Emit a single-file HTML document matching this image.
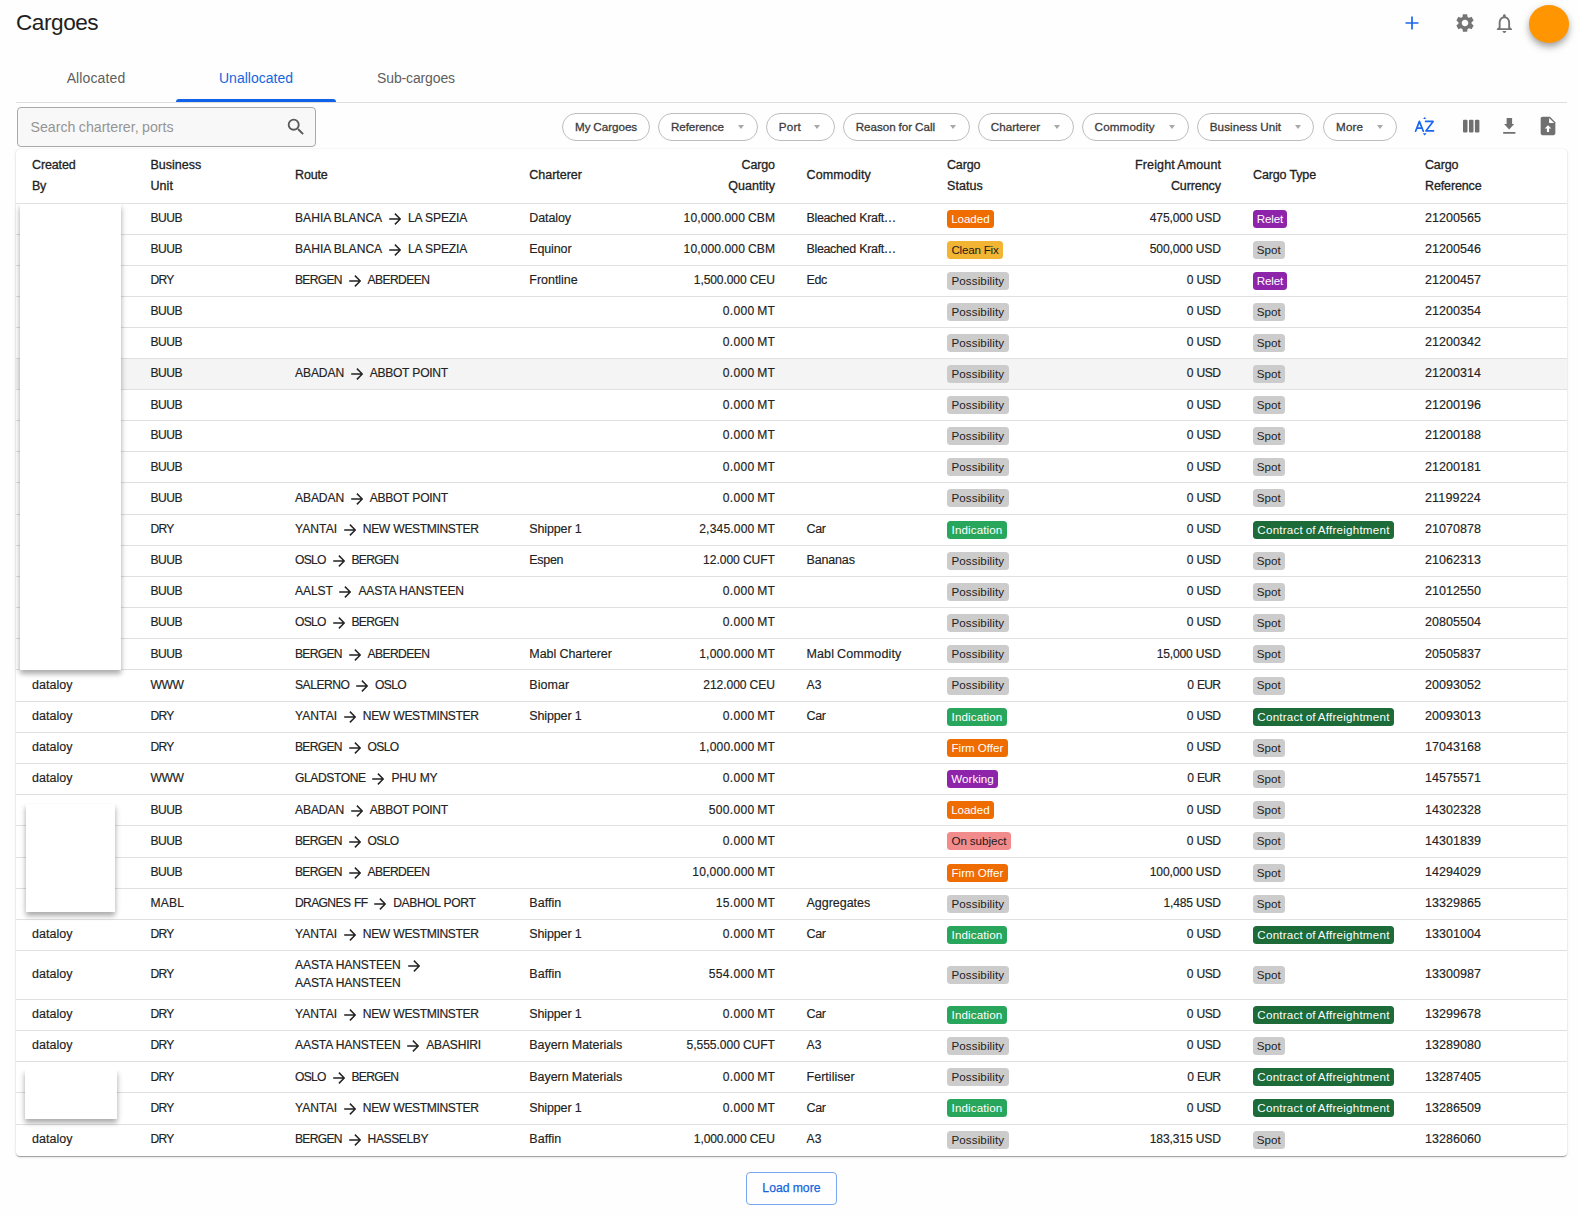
<!DOCTYPE html>
<html><head><meta charset="utf-8"><title>Cargoes</title>
<style>
*{box-sizing:border-box;margin:0;padding:0}
html,body{width:1578px;height:1217px;overflow:hidden}
body{background:#fefefe;font-family:"Liberation Sans",sans-serif;color:#212121;position:relative}
.abs{position:absolute}
.t{white-space:nowrap;color:#222;-webkit-text-stroke:0.15px currentColor}
.hd{white-space:nowrap;color:#222;-webkit-text-stroke:0.3px #222}
.ink{left:176px;top:98.5px;width:160px;height:3.5px;background:#1063e8;border-radius:3px 3px 0 0}
.divider{left:16px;top:102px;width:1551px;height:1px;background:#dedede}
.search{left:16.5px;top:107px;width:299.5px;height:39.5px;border:1px solid #a9a9a9;border-radius:4px;background:#f8f8f8}
.chipf{top:113px;height:28px;border:1px solid #bdbdbd;border-radius:14px;background:#fff}
.caret{top:125px;width:0;height:0;border-left:3.5px solid transparent;border-right:3.5px solid transparent;border-top:4.3px solid #a8a8a8}
.card{left:16px;top:148.5px;width:1551px;height:1007.5px;background:#fff;border-radius:4px;box-shadow:0 2px 1px -1px rgba(0,0,0,.2),0 1px 1px 0 rgba(0,0,0,.14),0 1px 3px 0 rgba(0,0,0,.12),0 0 1px 0 rgba(0,0,0,.12)}
.ln{left:16px;width:1551px;height:1px;background:#e0e0e0}
.tag{height:18px;border-radius:3.5px}
.arr{position:absolute;line-height:0}
.arr svg{display:block}
.red{background:#fff;box-shadow:0 4px 5px 0 rgba(0,0,0,.26),0 2px 7px 0 rgba(0,0,0,.12);clip-path:inset(0 -14px -16px -14px)}
.lm{left:746px;top:1172px;width:91px;height:33px;border:1px solid #7aa7f2;border-radius:4px}
</style></head><body>

<div class="abs t" style="left:16.00px;top:9.80px;font-size:22.6px;line-height:25px;letter-spacing:-0.460px;color:#1f1f1f;-webkit-text-stroke:0">Cargoes</div>
<svg class="abs" style="left:1404px;top:15px" width="16" height="16" viewBox="0 0 16 16"><path d="M8 1.5v13M1.5 8h13" stroke="#1a66ee" stroke-width="1.7" fill="none"/></svg>
<svg class="abs" style="left:1454.2px;top:12px" width="22" height="22" viewBox="0 0 24 24"><path fill="#757575" d="M19.14 12.94c.04-.3.06-.61.06-.94 0-.32-.02-.64-.07-.94l2.030-1.58a.49.49 0 0 0 .12-.61l-1.92-3.32a.488.488 0 0 0-.59-.22l-2.39.96c-.5-.38-1.03-.7-1.62-.94l-.36-2.54a.484.484 0 0 0-.48-.41h-3.840c-.24 0-.43.17-.47.41l-.36 2.54c-.59.24-1.13.57-1.62.94l-2.39-.96c-.22-.08-.47 0-.59.22L2.74 8.87c-.12.21-.08.47.12.61l2.03 1.58c-.05.3-.09.63-.09.94s.02.64.07.94l-2.03 1.58a.49.49 0 0 0-.12.61l1.92 3.32c.12.22.37.29.59.22l2.39-.96c.5.38 1.03.7 1.62.94l.36 2.54c.05.24.24.41.48.41h3.84c.24 0 .44-.17.47-.41l.36-2.54c.59-.24 1.13-.56 1.62-.94l2.39.96c.22.08.47 0 .59-.22l1.92-3.32c.12-.22.07-.47-.12-.61l-2.01-1.58zM12 15.6c-1.98 0-3.6-1.62-3.6-3.6s1.62-3.6 3.6-3.6 3.6 1.62 3.6 3.6-1.62 3.6-3.6 3.6z"/></svg>
<svg class="abs" style="left:1492.9px;top:12px" width="22.8" height="22.8" viewBox="0 0 24 24"><path fill="#757575" d="M12 22c1.1 0 2-.9 2-2h-4c0 1.1.89 2 2 2zm6-6v-5c0-3.07-1.64-5.64-4.5-6.32V4c0-.83-.67-1.5-1.5-1.5s-1.5.67-1.5 1.5v.68C7.63 5.36 6 7.920 6 11v5l-2 2v1h16v-1l-2-2zm-2 1H8v-6c0-2.48 1.51-4.5 4-4.5s4 2.02 4 4.5v6z"/></svg>
<div class="abs" style="left:1529.2px;top:5px;width:40.2px;height:37.8px;border-radius:50%;background:#ff9500;box-shadow:0 4px 6px -1px rgba(0,0,0,.25),0 5px 10px 0 rgba(0,0,0,.12),0 1px 10px 0 rgba(0,0,0,.08)"></div>
<div class="abs t" style="left:66.63px;top:70.00px;font-size:14.0px;line-height:16px;letter-spacing:0.128px;-webkit-text-stroke:0;color:#5f5f5f">Allocated</div>
<div class="abs t" style="left:218.98px;top:70.00px;font-size:14.0px;line-height:16px;letter-spacing:0.009px;-webkit-text-stroke:0;color:#1565e0">Unallocated</div>
<div class="abs t" style="left:377.09px;top:70.00px;font-size:14.0px;line-height:16px;letter-spacing:-0.142px;-webkit-text-stroke:0;color:#5f5f5f">Sub-cargoes</div>
<div class="abs divider"></div><div class="abs ink"></div>
<div class="abs search"></div>
<div class="abs t" style="left:30.50px;top:119.00px;font-size:14.2px;line-height:16px;letter-spacing:-0.023px;word-spacing:-0.383px;color:#959595;-webkit-text-stroke:0">Search charterer, ports</div>
<svg class="abs" style="left:285px;top:116px" width="22" height="22" viewBox="0 0 24 24"><path fill="#5a5a5a" d="M15.5 14h-.79l-.28-.27A6.471 6.471 0 0 0 16 9.5 6.5 6.5 0 1 0 9.5 16c1.61 0 3.09-.59 4.23-1.57l.27.28v.79l5 4.99L20.49 19l-4.99-5zm-6 0C7.01 14 5 11.99 5 9.5S7.01 5 9.5 5 14 7.01 14 9.5 11.99 14 9.5 14z"/></svg>
<div class="abs chipf" style="left:562.2px;width:87.7px"></div>
<div class="abs t" style="left:575.00px;top:119.90px;font-size:11.65px;line-height:13px;letter-spacing:-0.036px;word-spacing:-0.281px;color:#3c3c3c;-webkit-text-stroke:0.3px #3c3c3c">My Cargoes</div>
<div class="abs chipf" style="left:658.4px;width:99.2px"></div>
<div class="abs t" style="left:671.00px;top:119.90px;font-size:11.65px;line-height:13px;letter-spacing:-0.098px;color:#3c3c3c;-webkit-text-stroke:0.3px #3c3c3c">Reference</div>
<div class="abs caret" style="left:737.8px"></div>
<div class="abs chipf" style="left:766.3px;width:68.3px"></div>
<div class="abs t" style="left:778.80px;top:119.90px;font-size:11.65px;line-height:13px;letter-spacing:0.221px;color:#3c3c3c;-webkit-text-stroke:0.3px #3c3c3c">Port</div>
<div class="abs caret" style="left:813.8px"></div>
<div class="abs chipf" style="left:843.2px;width:126.5px"></div>
<div class="abs t" style="left:855.70px;top:119.90px;font-size:11.65px;line-height:13px;letter-spacing:-0.016px;word-spacing:-0.321px;color:#3c3c3c;-webkit-text-stroke:0.3px #3c3c3c">Reason for Call</div>
<div class="abs caret" style="left:949.9px"></div>
<div class="abs chipf" style="left:978.4px;width:95.4px"></div>
<div class="abs t" style="left:990.80px;top:119.90px;font-size:11.65px;line-height:13px;letter-spacing:0.008px;color:#3c3c3c;-webkit-text-stroke:0.3px #3c3c3c">Charterer</div>
<div class="abs caret" style="left:1054px"></div>
<div class="abs chipf" style="left:1082.3px;width:106.3px"></div>
<div class="abs t" style="left:1094.60px;top:119.90px;font-size:11.65px;line-height:13px;letter-spacing:0.147px;color:#3c3c3c;-webkit-text-stroke:0.3px #3c3c3c">Commodity</div>
<div class="abs caret" style="left:1168.7px"></div>
<div class="abs chipf" style="left:1197.3px;width:117.1px"></div>
<div class="abs t" style="left:1209.80px;top:119.90px;font-size:11.65px;line-height:13px;letter-spacing:0.047px;word-spacing:-0.446px;color:#3c3c3c;-webkit-text-stroke:0.3px #3c3c3c">Business Unit</div>
<div class="abs caret" style="left:1294.6px"></div>
<div class="abs chipf" style="left:1323.4px;width:73.2px"></div>
<div class="abs t" style="left:1336.10px;top:119.90px;font-size:11.65px;line-height:13px;letter-spacing:0.130px;color:#3c3c3c;-webkit-text-stroke:0.3px #3c3c3c">More</div>
<div class="abs caret" style="left:1376.8px"></div>
<svg class="abs" style="left:1408px;top:110px" width="32" height="32" viewBox="0 0 32 32"><g fill="none" stroke="#1a66ee" stroke-width="1.7" stroke-linejoin="round" stroke-linecap="round"><path d="M7.6 21.2L11.4 11.4L15.3 21.2M8.9 18.2H13.9"/><path d="M17.6 11.4H25.1L17.9 20.9H25.5"/></g><path d="M15.2 8.9L16.6 7.1L18.2 8.9Z M14.8 23.2H18.7L16.6 25.4Z" fill="#1a66ee"/></svg>
<svg class="abs" style="left:1462px;top:118px" width="18" height="16" viewBox="0 0 18 16"><rect x="1" y="1.8" width="4.5" height="12.8" rx="1" fill="#707070"/><rect x="7" y="1.8" width="4.5" height="12.8" rx="1" fill="#707070"/><rect x="12.9" y="1.8" width="4.5" height="12.8" rx="1" fill="#707070"/></svg>
<svg class="abs" style="left:1502px;top:116px" width="16" height="20" viewBox="0 0 16 20"><rect x="4.6" y="2" width="5.5" height="7" rx="0.5" fill="#707070"/><path d="M2.1 7.9H12.2L7.15 13.5Z" fill="#707070"/><rect x="1" y="16" width="12.6" height="1.7" rx="0.8" fill="#707070"/></svg>
<svg class="abs" style="left:1537.3px;top:115.2px" width="22" height="22" viewBox="0 0 24 24"><path d="M6 2h8.2l5.8 5.8V20c0 1.1-.9 2-2 2H6c-1.1 0-2-.9-2-2V4c0-1.1.9-2 2-2z" fill="#707070"/><path d="M13.2 3.2V8.8H18.8Z" fill="#fff"/><path d="M12 11.2l-3.6 3.6h2.4v3.8h2.4v-3.8h2.4z" fill="#fff"/></svg>
<div class="abs card"></div>
<div class="abs hd" style="left:32.00px;top:158.10px;font-size:12.5px;line-height:14px;letter-spacing:-0.119px;color:#222">Created</div>
<div class="abs hd" style="left:32.00px;top:179.20px;font-size:12.5px;line-height:14px;letter-spacing:-0.316px;color:#222">By</div>
<div class="abs hd" style="left:150.50px;top:158.10px;font-size:12.5px;line-height:14px;letter-spacing:0.009px;color:#222">Business</div>
<div class="abs hd" style="left:150.50px;top:179.20px;font-size:12.5px;line-height:14px;letter-spacing:0.042px;color:#222">Unit</div>
<div class="abs hd" style="left:295.00px;top:168.30px;font-size:12.5px;line-height:14px;letter-spacing:-0.145px;color:#222">Route</div>
<div class="abs hd" style="left:529.30px;top:168.30px;font-size:12.5px;line-height:14px;letter-spacing:-0.015px;color:#222">Charterer</div>
<div class="abs hd" style="left:374.84px;width:400px;text-align:right;top:158.10px;font-size:12.5px;line-height:14px;letter-spacing:-0.158px;color:#222">Cargo</div>
<div class="abs hd" style="left:375.02px;width:400px;text-align:right;top:179.20px;font-size:12.5px;line-height:14px;letter-spacing:0.020px;color:#222">Quantity</div>
<div class="abs hd" style="left:806.50px;top:168.30px;font-size:12.5px;line-height:14px;letter-spacing:0.129px;color:#222">Commodity</div>
<div class="abs hd" style="left:947.00px;top:158.10px;font-size:12.5px;line-height:14px;letter-spacing:-0.158px;color:#222">Cargo</div>
<div class="abs hd" style="left:947.00px;top:179.20px;font-size:12.5px;line-height:14px;letter-spacing:0.072px;color:#222">Status</div>
<div class="abs hd" style="left:821.15px;width:400px;text-align:right;top:158.10px;font-size:12.5px;line-height:14px;letter-spacing:0.145px;word-spacing:-0.680px;color:#222">Freight Amount</div>
<div class="abs hd" style="left:820.91px;width:400px;text-align:right;top:179.20px;font-size:12.5px;line-height:14px;letter-spacing:-0.093px;color:#222">Currency</div>
<div class="abs hd" style="left:1253.00px;top:168.30px;font-size:12.5px;line-height:14px;letter-spacing:-0.130px;word-spacing:-0.129px;color:#222">Cargo Type</div>
<div class="abs hd" style="left:1425.00px;top:158.10px;font-size:12.5px;line-height:14px;letter-spacing:-0.158px;color:#222">Cargo</div>
<div class="abs hd" style="left:1425.00px;top:179.20px;font-size:12.5px;line-height:14px;letter-spacing:-0.130px;color:#222">Reference</div>
<div class="abs ln" style="top:202.90px"></div>
<div class="abs ln" style="top:233.56px"></div>
<div class="abs t" style="left:150.50px;top:210.90px;font-size:12.1px;line-height:14px;letter-spacing:-0.492px;">BUUB</div>
<div class="abs t" style="left:295.00px;top:210.90px;font-size:12.1px;line-height:14px;letter-spacing:0.010px;word-spacing:-0.300px;">BAHIA BLANCA</div>
<div class="abs arr" style="left:388.95px;top:213.00px"><svg width="12" height="12" viewBox="0 0 12 12"><path d="M0.2 6H10.8M5.9 0.6L11.3 6L5.9 11.4" stroke="#222" stroke-width="1.5" fill="none"/></svg></div>
<div class="abs t" style="left:407.90px;top:210.90px;font-size:12.1px;line-height:14px;letter-spacing:-0.118px;word-spacing:-0.042px;">LA SPEZIA</div>
<div class="abs t" style="left:529.30px;top:210.90px;font-size:12.5px;line-height:14px;letter-spacing:-0.096px;">Dataloy</div>
<div class="abs t" style="left:375.08px;width:400px;text-align:right;top:210.90px;font-size:12.1px;line-height:14px;letter-spacing:0.083px;word-spacing:-0.446px;">10,000.000 CBM</div>
<div class="abs t" style="left:806.50px;top:210.90px;font-size:12.5px;line-height:14px;letter-spacing:-0.353px;word-spacing:0.316px;">Bleached Kraft…</div>
<div class="abs tag" style="left:947px;top:209.73px;width:46.7px;background:#ef6c00"></div><div class="abs t" style="left:951.15px;top:211.53px;font-size:11.6px;line-height:13px;letter-spacing:-0.050px;color:#fff;-webkit-text-stroke:0">Loaded</div>
<div class="abs t" style="left:820.86px;width:400px;text-align:right;top:210.90px;font-size:12.1px;line-height:14px;letter-spacing:-0.135px;word-spacing:-0.008px;">475,000 USD</div>
<div class="abs tag" style="left:1253px;top:209.73px;width:33.8px;background:#8e24aa"></div><div class="abs t" style="left:1256.87px;top:211.53px;font-size:11.6px;line-height:13px;letter-spacing:-0.205px;color:#fff;-webkit-text-stroke:0">Relet</div>
<div class="abs t" style="left:1425.00px;top:210.90px;font-size:12.5px;line-height:14px;letter-spacing:0.045px;">21200565</div>
<div class="abs ln" style="top:264.90px"></div>
<div class="abs t" style="left:150.50px;top:241.90px;font-size:12.1px;line-height:14px;letter-spacing:-0.492px;">BUUB</div>
<div class="abs t" style="left:295.00px;top:241.90px;font-size:12.1px;line-height:14px;letter-spacing:0.010px;word-spacing:-0.300px;">BAHIA BLANCA</div>
<div class="abs arr" style="left:388.95px;top:244.00px"><svg width="12" height="12" viewBox="0 0 12 12"><path d="M0.2 6H10.8M5.9 0.6L11.3 6L5.9 11.4" stroke="#222" stroke-width="1.5" fill="none"/></svg></div>
<div class="abs t" style="left:407.90px;top:241.90px;font-size:12.1px;line-height:14px;letter-spacing:-0.118px;word-spacing:-0.042px;">LA SPEZIA</div>
<div class="abs t" style="left:529.30px;top:241.90px;font-size:12.5px;line-height:14px;letter-spacing:-0.140px;">Equinor</div>
<div class="abs t" style="left:375.08px;width:400px;text-align:right;top:241.90px;font-size:12.1px;line-height:14px;letter-spacing:0.083px;word-spacing:-0.446px;">10,000.000 CBM</div>
<div class="abs t" style="left:806.50px;top:241.90px;font-size:12.5px;line-height:14px;letter-spacing:-0.353px;word-spacing:0.316px;">Bleached Kraft…</div>
<div class="abs tag" style="left:947px;top:240.73px;width:56px;background:#f2b533"></div><div class="abs t" style="left:951.45px;top:242.53px;font-size:11.6px;line-height:13px;letter-spacing:-0.221px;word-spacing:0.092px;color:#1a1a1a;-webkit-text-stroke:0">Clean Fix</div>
<div class="abs t" style="left:820.86px;width:400px;text-align:right;top:241.90px;font-size:12.1px;line-height:14px;letter-spacing:-0.135px;word-spacing:-0.008px;">500,000 USD</div>
<div class="abs tag" style="left:1253px;top:240.73px;width:31.5px;background:#cccccc"></div><div class="abs t" style="left:1256.84px;top:242.53px;font-size:11.6px;line-height:13px;letter-spacing:-0.012px;color:#222;-webkit-text-stroke:0">Spot</div>
<div class="abs t" style="left:1425.00px;top:241.90px;font-size:12.5px;line-height:14px;letter-spacing:0.045px;">21200546</div>
<div class="abs ln" style="top:295.80px"></div>
<div class="abs t" style="left:150.50px;top:273.10px;font-size:12.1px;line-height:14px;letter-spacing:-0.765px;">DRY</div>
<div class="abs t" style="left:295.00px;top:273.10px;font-size:12.1px;line-height:14px;letter-spacing:-0.696px;">BERGEN</div>
<div class="abs arr" style="left:348.62px;top:275.20px"><svg width="12" height="12" viewBox="0 0 12 12"><path d="M0.2 6H10.8M5.9 0.6L11.3 6L5.9 11.4" stroke="#222" stroke-width="1.5" fill="none"/></svg></div>
<div class="abs t" style="left:367.57px;top:273.10px;font-size:12.1px;line-height:14px;letter-spacing:-0.596px;">ABERDEEN</div>
<div class="abs t" style="left:529.30px;top:273.10px;font-size:12.5px;line-height:14px;letter-spacing:-0.028px;">Frontline</div>
<div class="abs t" style="left:374.87px;width:400px;text-align:right;top:273.10px;font-size:12.1px;line-height:14px;letter-spacing:-0.128px;word-spacing:-0.022px;">1,500.000 CEU</div>
<div class="abs t" style="left:806.50px;top:273.10px;font-size:12.5px;line-height:14px;letter-spacing:-0.349px;">Edc</div>
<div class="abs tag" style="left:947px;top:271.85px;width:61.7px;background:#cccccc"></div><div class="abs t" style="left:951.40px;top:273.65px;font-size:11.6px;line-height:13px;letter-spacing:0.121px;color:#222;-webkit-text-stroke:0">Possibility</div>
<div class="abs t" style="left:820.45px;width:400px;text-align:right;top:273.10px;font-size:12.1px;line-height:14px;letter-spacing:-0.548px;word-spacing:0.818px;">0 USD</div>
<div class="abs tag" style="left:1253px;top:271.85px;width:33.8px;background:#8e24aa"></div><div class="abs t" style="left:1256.87px;top:273.65px;font-size:11.6px;line-height:13px;letter-spacing:-0.205px;color:#fff;-webkit-text-stroke:0">Relet</div>
<div class="abs t" style="left:1425.00px;top:273.10px;font-size:12.5px;line-height:14px;letter-spacing:0.045px;">21200457</div>
<div class="abs ln" style="top:326.80px"></div>
<div class="abs t" style="left:150.50px;top:304.00px;font-size:12.1px;line-height:14px;letter-spacing:-0.492px;">BUUB</div>
<div class="abs t" style="left:375.28px;width:400px;text-align:right;top:304.00px;font-size:12.1px;line-height:14px;letter-spacing:0.276px;word-spacing:-0.831px;">0.000 MT</div>
<div class="abs tag" style="left:947px;top:302.80px;width:61.7px;background:#cccccc"></div><div class="abs t" style="left:951.40px;top:304.60px;font-size:11.6px;line-height:13px;letter-spacing:0.121px;color:#222;-webkit-text-stroke:0">Possibility</div>
<div class="abs t" style="left:820.45px;width:400px;text-align:right;top:304.00px;font-size:12.1px;line-height:14px;letter-spacing:-0.548px;word-spacing:0.818px;">0 USD</div>
<div class="abs tag" style="left:1253px;top:302.80px;width:31.5px;background:#cccccc"></div><div class="abs t" style="left:1256.84px;top:304.60px;font-size:11.6px;line-height:13px;letter-spacing:-0.012px;color:#222;-webkit-text-stroke:0">Spot</div>
<div class="abs t" style="left:1425.00px;top:304.00px;font-size:12.5px;line-height:14px;letter-spacing:0.045px;">21200354</div>
<div class="abs ln" style="top:358.15px"></div>
<div class="abs t" style="left:150.50px;top:334.80px;font-size:12.1px;line-height:14px;letter-spacing:-0.492px;">BUUB</div>
<div class="abs t" style="left:375.28px;width:400px;text-align:right;top:334.80px;font-size:12.1px;line-height:14px;letter-spacing:0.276px;word-spacing:-0.831px;">0.000 MT</div>
<div class="abs tag" style="left:947px;top:333.98px;width:61.7px;background:#cccccc"></div><div class="abs t" style="left:951.40px;top:335.78px;font-size:11.6px;line-height:13px;letter-spacing:0.121px;color:#222;-webkit-text-stroke:0">Possibility</div>
<div class="abs t" style="left:820.45px;width:400px;text-align:right;top:334.80px;font-size:12.1px;line-height:14px;letter-spacing:-0.548px;word-spacing:0.818px;">0 USD</div>
<div class="abs tag" style="left:1253px;top:333.98px;width:31.5px;background:#cccccc"></div><div class="abs t" style="left:1256.84px;top:335.78px;font-size:11.6px;line-height:13px;letter-spacing:-0.012px;color:#222;-webkit-text-stroke:0">Spot</div>
<div class="abs t" style="left:1425.00px;top:334.80px;font-size:12.5px;line-height:14px;letter-spacing:0.045px;">21200342</div>
<div class="abs" style="left:16px;top:359.15px;width:1551px;height:30.95px;background:#f4f4f4"></div>
<div class="abs ln" style="top:389.10px"></div>
<div class="abs t" style="left:150.50px;top:365.80px;font-size:12.1px;line-height:14px;letter-spacing:-0.492px;">BUUB</div>
<div class="abs t" style="left:295.00px;top:365.80px;font-size:12.1px;line-height:14px;letter-spacing:-0.122px;">ABADAN</div>
<div class="abs arr" style="left:350.73px;top:367.90px"><svg width="12" height="12" viewBox="0 0 12 12"><path d="M0.2 6H10.8M5.9 0.6L11.3 6L5.9 11.4" stroke="#222" stroke-width="1.5" fill="none"/></svg></div>
<div class="abs t" style="left:369.68px;top:365.80px;font-size:12.1px;line-height:14px;letter-spacing:-0.289px;word-spacing:0.300px;">ABBOT POINT</div>
<div class="abs t" style="left:375.28px;width:400px;text-align:right;top:365.80px;font-size:12.1px;line-height:14px;letter-spacing:0.276px;word-spacing:-0.831px;">0.000 MT</div>
<div class="abs tag" style="left:947px;top:365.12px;width:61.7px;background:#cccccc"></div><div class="abs t" style="left:951.40px;top:366.93px;font-size:11.6px;line-height:13px;letter-spacing:0.121px;color:#222;-webkit-text-stroke:0">Possibility</div>
<div class="abs t" style="left:820.45px;width:400px;text-align:right;top:365.80px;font-size:12.1px;line-height:14px;letter-spacing:-0.548px;word-spacing:0.818px;">0 USD</div>
<div class="abs tag" style="left:1253px;top:365.12px;width:31.5px;background:#cccccc"></div><div class="abs t" style="left:1256.84px;top:366.93px;font-size:11.6px;line-height:13px;letter-spacing:-0.012px;color:#222;-webkit-text-stroke:0">Spot</div>
<div class="abs t" style="left:1425.00px;top:365.80px;font-size:12.5px;line-height:14px;letter-spacing:0.045px;">21200314</div>
<div class="abs ln" style="top:420.10px"></div>
<div class="abs t" style="left:150.50px;top:397.50px;font-size:12.1px;line-height:14px;letter-spacing:-0.492px;">BUUB</div>
<div class="abs t" style="left:375.28px;width:400px;text-align:right;top:397.50px;font-size:12.1px;line-height:14px;letter-spacing:0.276px;word-spacing:-0.831px;">0.000 MT</div>
<div class="abs tag" style="left:947px;top:396.10px;width:61.7px;background:#cccccc"></div><div class="abs t" style="left:951.40px;top:397.90px;font-size:11.6px;line-height:13px;letter-spacing:0.121px;color:#222;-webkit-text-stroke:0">Possibility</div>
<div class="abs t" style="left:820.45px;width:400px;text-align:right;top:397.50px;font-size:12.1px;line-height:14px;letter-spacing:-0.548px;word-spacing:0.818px;">0 USD</div>
<div class="abs tag" style="left:1253px;top:396.10px;width:31.5px;background:#cccccc"></div><div class="abs t" style="left:1256.84px;top:397.90px;font-size:11.6px;line-height:13px;letter-spacing:-0.012px;color:#222;-webkit-text-stroke:0">Spot</div>
<div class="abs t" style="left:1425.00px;top:397.50px;font-size:12.5px;line-height:14px;letter-spacing:0.045px;">21200196</div>
<div class="abs ln" style="top:451.20px"></div>
<div class="abs t" style="left:150.50px;top:428.30px;font-size:12.1px;line-height:14px;letter-spacing:-0.492px;">BUUB</div>
<div class="abs t" style="left:375.28px;width:400px;text-align:right;top:428.30px;font-size:12.1px;line-height:14px;letter-spacing:0.276px;word-spacing:-0.831px;">0.000 MT</div>
<div class="abs tag" style="left:947px;top:427.15px;width:61.7px;background:#cccccc"></div><div class="abs t" style="left:951.40px;top:428.95px;font-size:11.6px;line-height:13px;letter-spacing:0.121px;color:#222;-webkit-text-stroke:0">Possibility</div>
<div class="abs t" style="left:820.45px;width:400px;text-align:right;top:428.30px;font-size:12.1px;line-height:14px;letter-spacing:-0.548px;word-spacing:0.818px;">0 USD</div>
<div class="abs tag" style="left:1253px;top:427.15px;width:31.5px;background:#cccccc"></div><div class="abs t" style="left:1256.84px;top:428.95px;font-size:11.6px;line-height:13px;letter-spacing:-0.012px;color:#222;-webkit-text-stroke:0">Spot</div>
<div class="abs t" style="left:1425.00px;top:428.30px;font-size:12.5px;line-height:14px;letter-spacing:0.045px;">21200188</div>
<div class="abs ln" style="top:482.10px"></div>
<div class="abs t" style="left:150.50px;top:459.60px;font-size:12.1px;line-height:14px;letter-spacing:-0.492px;">BUUB</div>
<div class="abs t" style="left:375.28px;width:400px;text-align:right;top:459.60px;font-size:12.1px;line-height:14px;letter-spacing:0.276px;word-spacing:-0.831px;">0.000 MT</div>
<div class="abs tag" style="left:947px;top:458.15px;width:61.7px;background:#cccccc"></div><div class="abs t" style="left:951.40px;top:459.95px;font-size:11.6px;line-height:13px;letter-spacing:0.121px;color:#222;-webkit-text-stroke:0">Possibility</div>
<div class="abs t" style="left:820.45px;width:400px;text-align:right;top:459.60px;font-size:12.1px;line-height:14px;letter-spacing:-0.548px;word-spacing:0.818px;">0 USD</div>
<div class="abs tag" style="left:1253px;top:458.15px;width:31.5px;background:#cccccc"></div><div class="abs t" style="left:1256.84px;top:459.95px;font-size:11.6px;line-height:13px;letter-spacing:-0.012px;color:#222;-webkit-text-stroke:0">Spot</div>
<div class="abs t" style="left:1425.00px;top:459.60px;font-size:12.5px;line-height:14px;letter-spacing:0.045px;">21200181</div>
<div class="abs ln" style="top:513.60px"></div>
<div class="abs t" style="left:150.50px;top:490.60px;font-size:12.1px;line-height:14px;letter-spacing:-0.492px;">BUUB</div>
<div class="abs t" style="left:295.00px;top:490.60px;font-size:12.1px;line-height:14px;letter-spacing:-0.122px;">ABADAN</div>
<div class="abs arr" style="left:350.73px;top:492.70px"><svg width="12" height="12" viewBox="0 0 12 12"><path d="M0.2 6H10.8M5.9 0.6L11.3 6L5.9 11.4" stroke="#222" stroke-width="1.5" fill="none"/></svg></div>
<div class="abs t" style="left:369.68px;top:490.60px;font-size:12.1px;line-height:14px;letter-spacing:-0.289px;word-spacing:0.300px;">ABBOT POINT</div>
<div class="abs t" style="left:375.28px;width:400px;text-align:right;top:490.60px;font-size:12.1px;line-height:14px;letter-spacing:0.276px;word-spacing:-0.831px;">0.000 MT</div>
<div class="abs tag" style="left:947px;top:489.35px;width:61.7px;background:#cccccc"></div><div class="abs t" style="left:951.40px;top:491.15px;font-size:11.6px;line-height:13px;letter-spacing:0.121px;color:#222;-webkit-text-stroke:0">Possibility</div>
<div class="abs t" style="left:820.45px;width:400px;text-align:right;top:490.60px;font-size:12.1px;line-height:14px;letter-spacing:-0.548px;word-spacing:0.818px;">0 USD</div>
<div class="abs tag" style="left:1253px;top:489.35px;width:31.5px;background:#cccccc"></div><div class="abs t" style="left:1256.84px;top:491.15px;font-size:11.6px;line-height:13px;letter-spacing:-0.012px;color:#222;-webkit-text-stroke:0">Spot</div>
<div class="abs t" style="left:1425.00px;top:490.60px;font-size:12.5px;line-height:14px;letter-spacing:0.161px;">21199224</div>
<div class="abs ln" style="top:544.90px"></div>
<div class="abs t" style="left:150.50px;top:521.80px;font-size:12.1px;line-height:14px;letter-spacing:-0.765px;">DRY</div>
<div class="abs t" style="left:295.00px;top:521.80px;font-size:12.1px;line-height:14px;letter-spacing:0.046px;">YANTAI</div>
<div class="abs arr" style="left:343.88px;top:523.90px"><svg width="12" height="12" viewBox="0 0 12 12"><path d="M0.2 6H10.8M5.9 0.6L11.3 6L5.9 11.4" stroke="#222" stroke-width="1.5" fill="none"/></svg></div>
<div class="abs t" style="left:362.83px;top:521.80px;font-size:12.1px;line-height:14px;letter-spacing:-0.384px;word-spacing:0.489px;">NEW WESTMINSTER</div>
<div class="abs t" style="left:529.30px;top:521.80px;font-size:12.5px;line-height:14px;letter-spacing:-0.135px;word-spacing:-0.121px;">Shipper 1</div>
<div class="abs t" style="left:375.15px;width:400px;text-align:right;top:521.80px;font-size:12.1px;line-height:14px;letter-spacing:0.155px;word-spacing:-0.589px;">2,345.000 MT</div>
<div class="abs t" style="left:806.50px;top:521.80px;font-size:12.5px;line-height:14px;letter-spacing:-0.348px;">Car</div>
<div class="abs tag" style="left:947px;top:520.75px;width:60px;background:#28a65c"></div><div class="abs t" style="left:951.54px;top:522.55px;font-size:11.6px;line-height:13px;letter-spacing:0.127px;color:#fff;-webkit-text-stroke:0">Indication</div>
<div class="abs t" style="left:820.45px;width:400px;text-align:right;top:521.80px;font-size:12.1px;line-height:14px;letter-spacing:-0.548px;word-spacing:0.818px;">0 USD</div>
<div class="abs tag" style="left:1253px;top:520.75px;width:141px;background:#1c6b38"></div><div class="abs t" style="left:1257.36px;top:522.55px;font-size:11.6px;line-height:13px;letter-spacing:0.233px;word-spacing:-0.816px;color:#fff;-webkit-text-stroke:0">Contract of Affreightment</div>
<div class="abs t" style="left:1425.00px;top:521.80px;font-size:12.5px;line-height:14px;letter-spacing:0.045px;">21070878</div>
<div class="abs ln" style="top:575.95px"></div>
<div class="abs t" style="left:150.50px;top:552.80px;font-size:12.1px;line-height:14px;letter-spacing:-0.492px;">BUUB</div>
<div class="abs t" style="left:295.00px;top:552.80px;font-size:12.1px;line-height:14px;letter-spacing:-0.696px;">OSLO</div>
<div class="abs arr" style="left:332.54px;top:554.90px"><svg width="12" height="12" viewBox="0 0 12 12"><path d="M0.2 6H10.8M5.9 0.6L11.3 6L5.9 11.4" stroke="#222" stroke-width="1.5" fill="none"/></svg></div>
<div class="abs t" style="left:351.49px;top:552.80px;font-size:12.1px;line-height:14px;letter-spacing:-0.696px;">BERGEN</div>
<div class="abs t" style="left:529.30px;top:552.80px;font-size:12.5px;line-height:14px;letter-spacing:-0.296px;">Espen</div>
<div class="abs t" style="left:374.96px;width:400px;text-align:right;top:552.80px;font-size:12.1px;line-height:14px;letter-spacing:-0.042px;word-spacing:-0.195px;">12.000 CUFT</div>
<div class="abs t" style="left:806.50px;top:552.80px;font-size:12.5px;line-height:14px;letter-spacing:-0.158px;">Bananas</div>
<div class="abs tag" style="left:947px;top:551.92px;width:61.7px;background:#cccccc"></div><div class="abs t" style="left:951.40px;top:553.72px;font-size:11.6px;line-height:13px;letter-spacing:0.121px;color:#222;-webkit-text-stroke:0">Possibility</div>
<div class="abs t" style="left:820.45px;width:400px;text-align:right;top:552.80px;font-size:12.1px;line-height:14px;letter-spacing:-0.548px;word-spacing:0.818px;">0 USD</div>
<div class="abs tag" style="left:1253px;top:551.92px;width:31.5px;background:#cccccc"></div><div class="abs t" style="left:1256.84px;top:553.72px;font-size:11.6px;line-height:13px;letter-spacing:-0.012px;color:#222;-webkit-text-stroke:0">Spot</div>
<div class="abs t" style="left:1425.00px;top:552.80px;font-size:12.5px;line-height:14px;letter-spacing:0.045px;">21062313</div>
<div class="abs ln" style="top:607.10px"></div>
<div class="abs t" style="left:150.50px;top:583.80px;font-size:12.1px;line-height:14px;letter-spacing:-0.492px;">BUUB</div>
<div class="abs t" style="left:295.00px;top:583.80px;font-size:12.1px;line-height:14px;letter-spacing:-0.112px;">AALST</div>
<div class="abs arr" style="left:339.47px;top:585.90px"><svg width="12" height="12" viewBox="0 0 12 12"><path d="M0.2 6H10.8M5.9 0.6L11.3 6L5.9 11.4" stroke="#222" stroke-width="1.5" fill="none"/></svg></div>
<div class="abs t" style="left:358.42px;top:583.80px;font-size:12.1px;line-height:14px;letter-spacing:-0.122px;word-spacing:-0.034px;">AASTA HANSTEEN</div>
<div class="abs t" style="left:375.28px;width:400px;text-align:right;top:583.80px;font-size:12.1px;line-height:14px;letter-spacing:0.276px;word-spacing:-0.831px;">0.000 MT</div>
<div class="abs tag" style="left:947px;top:583.03px;width:61.7px;background:#cccccc"></div><div class="abs t" style="left:951.40px;top:584.83px;font-size:11.6px;line-height:13px;letter-spacing:0.121px;color:#222;-webkit-text-stroke:0">Possibility</div>
<div class="abs t" style="left:820.45px;width:400px;text-align:right;top:583.80px;font-size:12.1px;line-height:14px;letter-spacing:-0.548px;word-spacing:0.818px;">0 USD</div>
<div class="abs tag" style="left:1253px;top:583.03px;width:31.5px;background:#cccccc"></div><div class="abs t" style="left:1256.84px;top:584.83px;font-size:11.6px;line-height:13px;letter-spacing:-0.012px;color:#222;-webkit-text-stroke:0">Spot</div>
<div class="abs t" style="left:1425.00px;top:583.80px;font-size:12.5px;line-height:14px;letter-spacing:0.045px;">21012550</div>
<div class="abs ln" style="top:638.10px"></div>
<div class="abs t" style="left:150.50px;top:614.70px;font-size:12.1px;line-height:14px;letter-spacing:-0.492px;">BUUB</div>
<div class="abs t" style="left:295.00px;top:614.70px;font-size:12.1px;line-height:14px;letter-spacing:-0.696px;">OSLO</div>
<div class="abs arr" style="left:332.54px;top:616.80px"><svg width="12" height="12" viewBox="0 0 12 12"><path d="M0.2 6H10.8M5.9 0.6L11.3 6L5.9 11.4" stroke="#222" stroke-width="1.5" fill="none"/></svg></div>
<div class="abs t" style="left:351.49px;top:614.70px;font-size:12.1px;line-height:14px;letter-spacing:-0.696px;">BERGEN</div>
<div class="abs t" style="left:375.28px;width:400px;text-align:right;top:614.70px;font-size:12.1px;line-height:14px;letter-spacing:0.276px;word-spacing:-0.831px;">0.000 MT</div>
<div class="abs tag" style="left:947px;top:614.10px;width:61.7px;background:#cccccc"></div><div class="abs t" style="left:951.40px;top:615.90px;font-size:11.6px;line-height:13px;letter-spacing:0.121px;color:#222;-webkit-text-stroke:0">Possibility</div>
<div class="abs t" style="left:820.45px;width:400px;text-align:right;top:614.70px;font-size:12.1px;line-height:14px;letter-spacing:-0.548px;word-spacing:0.818px;">0 USD</div>
<div class="abs tag" style="left:1253px;top:614.10px;width:31.5px;background:#cccccc"></div><div class="abs t" style="left:1256.84px;top:615.90px;font-size:11.6px;line-height:13px;letter-spacing:-0.012px;color:#222;-webkit-text-stroke:0">Spot</div>
<div class="abs t" style="left:1425.00px;top:614.70px;font-size:12.5px;line-height:14px;letter-spacing:0.045px;">20805504</div>
<div class="abs ln" style="top:669.10px"></div>
<div class="abs t" style="left:150.50px;top:646.80px;font-size:12.1px;line-height:14px;letter-spacing:-0.492px;">BUUB</div>
<div class="abs t" style="left:295.00px;top:646.80px;font-size:12.1px;line-height:14px;letter-spacing:-0.696px;">BERGEN</div>
<div class="abs arr" style="left:348.62px;top:648.90px"><svg width="12" height="12" viewBox="0 0 12 12"><path d="M0.2 6H10.8M5.9 0.6L11.3 6L5.9 11.4" stroke="#222" stroke-width="1.5" fill="none"/></svg></div>
<div class="abs t" style="left:367.57px;top:646.80px;font-size:12.1px;line-height:14px;letter-spacing:-0.596px;">ABERDEEN</div>
<div class="abs t" style="left:529.30px;top:646.80px;font-size:12.5px;line-height:14px;letter-spacing:-0.031px;word-spacing:-0.329px;">Mabl Charterer</div>
<div class="abs t" style="left:375.15px;width:400px;text-align:right;top:646.80px;font-size:12.1px;line-height:14px;letter-spacing:0.155px;word-spacing:-0.589px;">1,000.000 MT</div>
<div class="abs t" style="left:806.50px;top:646.80px;font-size:12.5px;line-height:14px;letter-spacing:0.126px;word-spacing:-0.641px;">Mabl Commodity</div>
<div class="abs tag" style="left:947px;top:645.10px;width:61.7px;background:#cccccc"></div><div class="abs t" style="left:951.40px;top:646.90px;font-size:11.6px;line-height:13px;letter-spacing:0.121px;color:#222;-webkit-text-stroke:0">Possibility</div>
<div class="abs t" style="left:820.81px;width:400px;text-align:right;top:646.80px;font-size:12.1px;line-height:14px;letter-spacing:-0.186px;word-spacing:0.092px;">15,000 USD</div>
<div class="abs tag" style="left:1253px;top:645.10px;width:31.5px;background:#cccccc"></div><div class="abs t" style="left:1256.84px;top:646.90px;font-size:11.6px;line-height:13px;letter-spacing:-0.012px;color:#222;-webkit-text-stroke:0">Spot</div>
<div class="abs t" style="left:1425.00px;top:646.80px;font-size:12.5px;line-height:14px;letter-spacing:0.045px;">20505837</div>
<div class="abs ln" style="top:700.95px"></div>
<div class="abs t" style="left:32.00px;top:677.80px;font-size:12.5px;line-height:14px;letter-spacing:0.036px;">dataloy</div>
<div class="abs t" style="left:150.50px;top:677.80px;font-size:12.1px;line-height:14px;letter-spacing:-0.377px;">WWW</div>
<div class="abs t" style="left:295.00px;top:677.80px;font-size:12.1px;line-height:14px;letter-spacing:-0.489px;">SALERNO</div>
<div class="abs arr" style="left:356.11px;top:679.90px"><svg width="12" height="12" viewBox="0 0 12 12"><path d="M0.2 6H10.8M5.9 0.6L11.3 6L5.9 11.4" stroke="#222" stroke-width="1.5" fill="none"/></svg></div>
<div class="abs t" style="left:375.06px;top:677.80px;font-size:12.1px;line-height:14px;letter-spacing:-0.696px;">OSLO</div>
<div class="abs t" style="left:529.30px;top:677.80px;font-size:12.5px;line-height:14px;letter-spacing:0.033px;">Biomar</div>
<div class="abs t" style="left:374.91px;width:400px;text-align:right;top:677.80px;font-size:12.1px;line-height:14px;letter-spacing:-0.085px;word-spacing:-0.108px;">212.000 CEU</div>
<div class="abs t" style="left:806.50px;top:677.80px;font-size:12.1px;line-height:14px;letter-spacing:0.157px;">A3</div>
<div class="abs tag" style="left:947px;top:676.53px;width:61.7px;background:#cccccc"></div><div class="abs t" style="left:951.40px;top:678.33px;font-size:11.6px;line-height:13px;letter-spacing:0.121px;color:#222;-webkit-text-stroke:0">Possibility</div>
<div class="abs t" style="left:820.18px;width:400px;text-align:right;top:677.80px;font-size:12.1px;line-height:14px;letter-spacing:-0.822px;word-spacing:1.366px;">0 EUR</div>
<div class="abs tag" style="left:1253px;top:676.53px;width:31.5px;background:#cccccc"></div><div class="abs t" style="left:1256.84px;top:678.33px;font-size:11.6px;line-height:13px;letter-spacing:-0.012px;color:#222;-webkit-text-stroke:0">Spot</div>
<div class="abs t" style="left:1425.00px;top:677.80px;font-size:12.5px;line-height:14px;letter-spacing:0.045px;">20093052</div>
<div class="abs ln" style="top:732.10px"></div>
<div class="abs t" style="left:32.00px;top:709.00px;font-size:12.5px;line-height:14px;letter-spacing:0.036px;">dataloy</div>
<div class="abs t" style="left:150.50px;top:709.00px;font-size:12.1px;line-height:14px;letter-spacing:-0.765px;">DRY</div>
<div class="abs t" style="left:295.00px;top:709.00px;font-size:12.1px;line-height:14px;letter-spacing:0.046px;">YANTAI</div>
<div class="abs arr" style="left:343.88px;top:711.10px"><svg width="12" height="12" viewBox="0 0 12 12"><path d="M0.2 6H10.8M5.9 0.6L11.3 6L5.9 11.4" stroke="#222" stroke-width="1.5" fill="none"/></svg></div>
<div class="abs t" style="left:362.83px;top:709.00px;font-size:12.1px;line-height:14px;letter-spacing:-0.384px;word-spacing:0.489px;">NEW WESTMINSTER</div>
<div class="abs t" style="left:529.30px;top:709.00px;font-size:12.5px;line-height:14px;letter-spacing:-0.135px;word-spacing:-0.121px;">Shipper 1</div>
<div class="abs t" style="left:375.28px;width:400px;text-align:right;top:709.00px;font-size:12.1px;line-height:14px;letter-spacing:0.276px;word-spacing:-0.831px;">0.000 MT</div>
<div class="abs t" style="left:806.50px;top:709.00px;font-size:12.5px;line-height:14px;letter-spacing:-0.348px;">Car</div>
<div class="abs tag" style="left:947px;top:708.03px;width:60px;background:#28a65c"></div><div class="abs t" style="left:951.54px;top:709.83px;font-size:11.6px;line-height:13px;letter-spacing:0.127px;color:#fff;-webkit-text-stroke:0">Indication</div>
<div class="abs t" style="left:820.45px;width:400px;text-align:right;top:709.00px;font-size:12.1px;line-height:14px;letter-spacing:-0.548px;word-spacing:0.818px;">0 USD</div>
<div class="abs tag" style="left:1253px;top:708.03px;width:141px;background:#1c6b38"></div><div class="abs t" style="left:1257.36px;top:709.83px;font-size:11.6px;line-height:13px;letter-spacing:0.233px;word-spacing:-0.816px;color:#fff;-webkit-text-stroke:0">Contract of Affreightment</div>
<div class="abs t" style="left:1425.00px;top:709.00px;font-size:12.5px;line-height:14px;letter-spacing:0.045px;">20093013</div>
<div class="abs ln" style="top:763.30px"></div>
<div class="abs t" style="left:32.00px;top:739.70px;font-size:12.5px;line-height:14px;letter-spacing:0.036px;">dataloy</div>
<div class="abs t" style="left:150.50px;top:739.70px;font-size:12.1px;line-height:14px;letter-spacing:-0.765px;">DRY</div>
<div class="abs t" style="left:295.00px;top:739.70px;font-size:12.1px;line-height:14px;letter-spacing:-0.696px;">BERGEN</div>
<div class="abs arr" style="left:348.62px;top:741.80px"><svg width="12" height="12" viewBox="0 0 12 12"><path d="M0.2 6H10.8M5.9 0.6L11.3 6L5.9 11.4" stroke="#222" stroke-width="1.5" fill="none"/></svg></div>
<div class="abs t" style="left:367.57px;top:739.70px;font-size:12.1px;line-height:14px;letter-spacing:-0.696px;">OSLO</div>
<div class="abs t" style="left:375.15px;width:400px;text-align:right;top:739.70px;font-size:12.1px;line-height:14px;letter-spacing:0.155px;word-spacing:-0.589px;">1,000.000 MT</div>
<div class="abs tag" style="left:947px;top:739.20px;width:61px;background:#ef6c00"></div><div class="abs t" style="left:951.39px;top:741.00px;font-size:11.6px;line-height:13px;letter-spacing:0.072px;word-spacing:-0.495px;color:#fff;-webkit-text-stroke:0">Firm Offer</div>
<div class="abs t" style="left:820.45px;width:400px;text-align:right;top:739.70px;font-size:12.1px;line-height:14px;letter-spacing:-0.548px;word-spacing:0.818px;">0 USD</div>
<div class="abs tag" style="left:1253px;top:739.20px;width:31.5px;background:#cccccc"></div><div class="abs t" style="left:1256.84px;top:741.00px;font-size:11.6px;line-height:13px;letter-spacing:-0.012px;color:#222;-webkit-text-stroke:0">Spot</div>
<div class="abs t" style="left:1425.00px;top:739.70px;font-size:12.5px;line-height:14px;letter-spacing:0.045px;">17043168</div>
<div class="abs ln" style="top:794.10px"></div>
<div class="abs t" style="left:32.00px;top:770.70px;font-size:12.5px;line-height:14px;letter-spacing:0.036px;">dataloy</div>
<div class="abs t" style="left:150.50px;top:770.70px;font-size:12.1px;line-height:14px;letter-spacing:-0.377px;">WWW</div>
<div class="abs t" style="left:295.00px;top:770.70px;font-size:12.1px;line-height:14px;letter-spacing:-0.407px;">GLADSTONE</div>
<div class="abs arr" style="left:372.45px;top:772.80px"><svg width="12" height="12" viewBox="0 0 12 12"><path d="M0.2 6H10.8M5.9 0.6L11.3 6L5.9 11.4" stroke="#222" stroke-width="1.5" fill="none"/></svg></div>
<div class="abs t" style="left:391.40px;top:770.70px;font-size:12.1px;line-height:14px;letter-spacing:-0.179px;word-spacing:0.079px;">PHU MY</div>
<div class="abs t" style="left:375.28px;width:400px;text-align:right;top:770.70px;font-size:12.1px;line-height:14px;letter-spacing:0.276px;word-spacing:-0.831px;">0.000 MT</div>
<div class="abs tag" style="left:947px;top:770.20px;width:51px;background:#8e24aa"></div><div class="abs t" style="left:951.36px;top:772.00px;font-size:11.6px;line-height:13px;letter-spacing:-0.007px;color:#fff;-webkit-text-stroke:0">Working</div>
<div class="abs t" style="left:820.18px;width:400px;text-align:right;top:770.70px;font-size:12.1px;line-height:14px;letter-spacing:-0.822px;word-spacing:1.366px;">0 EUR</div>
<div class="abs tag" style="left:1253px;top:770.20px;width:31.5px;background:#cccccc"></div><div class="abs t" style="left:1256.84px;top:772.00px;font-size:11.6px;line-height:13px;letter-spacing:-0.012px;color:#222;-webkit-text-stroke:0">Spot</div>
<div class="abs t" style="left:1425.00px;top:770.70px;font-size:12.5px;line-height:14px;letter-spacing:0.045px;">14575571</div>
<div class="abs ln" style="top:825.00px"></div>
<div class="abs t" style="left:150.50px;top:802.50px;font-size:12.1px;line-height:14px;letter-spacing:-0.492px;">BUUB</div>
<div class="abs t" style="left:295.00px;top:802.50px;font-size:12.1px;line-height:14px;letter-spacing:-0.122px;">ABADAN</div>
<div class="abs arr" style="left:350.73px;top:804.60px"><svg width="12" height="12" viewBox="0 0 12 12"><path d="M0.2 6H10.8M5.9 0.6L11.3 6L5.9 11.4" stroke="#222" stroke-width="1.5" fill="none"/></svg></div>
<div class="abs t" style="left:369.68px;top:802.50px;font-size:12.1px;line-height:14px;letter-spacing:-0.289px;word-spacing:0.300px;">ABBOT POINT</div>
<div class="abs t" style="left:375.27px;width:400px;text-align:right;top:802.50px;font-size:12.1px;line-height:14px;letter-spacing:0.274px;word-spacing:-0.826px;">500.000 MT</div>
<div class="abs tag" style="left:947px;top:801.05px;width:46.7px;background:#ef6c00"></div><div class="abs t" style="left:951.15px;top:802.85px;font-size:11.6px;line-height:13px;letter-spacing:-0.050px;color:#fff;-webkit-text-stroke:0">Loaded</div>
<div class="abs t" style="left:820.45px;width:400px;text-align:right;top:802.50px;font-size:12.1px;line-height:14px;letter-spacing:-0.548px;word-spacing:0.818px;">0 USD</div>
<div class="abs tag" style="left:1253px;top:801.05px;width:31.5px;background:#cccccc"></div><div class="abs t" style="left:1256.84px;top:802.85px;font-size:11.6px;line-height:13px;letter-spacing:-0.012px;color:#222;-webkit-text-stroke:0">Spot</div>
<div class="abs t" style="left:1425.00px;top:802.50px;font-size:12.5px;line-height:14px;letter-spacing:0.045px;">14302328</div>
<div class="abs ln" style="top:856.80px"></div>
<div class="abs t" style="left:150.50px;top:834.00px;font-size:12.1px;line-height:14px;letter-spacing:-0.492px;">BUUB</div>
<div class="abs t" style="left:295.00px;top:834.00px;font-size:12.1px;line-height:14px;letter-spacing:-0.696px;">BERGEN</div>
<div class="abs arr" style="left:348.62px;top:836.10px"><svg width="12" height="12" viewBox="0 0 12 12"><path d="M0.2 6H10.8M5.9 0.6L11.3 6L5.9 11.4" stroke="#222" stroke-width="1.5" fill="none"/></svg></div>
<div class="abs t" style="left:367.57px;top:834.00px;font-size:12.1px;line-height:14px;letter-spacing:-0.696px;">OSLO</div>
<div class="abs t" style="left:375.28px;width:400px;text-align:right;top:834.00px;font-size:12.1px;line-height:14px;letter-spacing:0.276px;word-spacing:-0.831px;">0.000 MT</div>
<div class="abs tag" style="left:947px;top:832.40px;width:64px;background:#f28b8b"></div><div class="abs t" style="left:951.53px;top:834.20px;font-size:11.6px;line-height:13px;letter-spacing:-0.020px;word-spacing:-0.309px;color:#1a1a1a;-webkit-text-stroke:0">On subject</div>
<div class="abs t" style="left:820.45px;width:400px;text-align:right;top:834.00px;font-size:12.1px;line-height:14px;letter-spacing:-0.548px;word-spacing:0.818px;">0 USD</div>
<div class="abs tag" style="left:1253px;top:832.40px;width:31.5px;background:#cccccc"></div><div class="abs t" style="left:1256.84px;top:834.20px;font-size:11.6px;line-height:13px;letter-spacing:-0.012px;color:#222;-webkit-text-stroke:0">Spot</div>
<div class="abs t" style="left:1425.00px;top:834.00px;font-size:12.5px;line-height:14px;letter-spacing:0.045px;">14301839</div>
<div class="abs ln" style="top:888.30px"></div>
<div class="abs t" style="left:150.50px;top:864.70px;font-size:12.1px;line-height:14px;letter-spacing:-0.492px;">BUUB</div>
<div class="abs t" style="left:295.00px;top:864.70px;font-size:12.1px;line-height:14px;letter-spacing:-0.696px;">BERGEN</div>
<div class="abs arr" style="left:348.62px;top:866.80px"><svg width="12" height="12" viewBox="0 0 12 12"><path d="M0.2 6H10.8M5.9 0.6L11.3 6L5.9 11.4" stroke="#222" stroke-width="1.5" fill="none"/></svg></div>
<div class="abs t" style="left:367.57px;top:864.70px;font-size:12.1px;line-height:14px;letter-spacing:-0.596px;">ABERDEEN</div>
<div class="abs t" style="left:375.17px;width:400px;text-align:right;top:864.70px;font-size:12.1px;line-height:14px;letter-spacing:0.165px;word-spacing:-0.609px;">10,000.000 MT</div>
<div class="abs tag" style="left:947px;top:864.05px;width:61px;background:#ef6c00"></div><div class="abs t" style="left:951.39px;top:865.85px;font-size:11.6px;line-height:13px;letter-spacing:0.072px;word-spacing:-0.495px;color:#fff;-webkit-text-stroke:0">Firm Offer</div>
<div class="abs t" style="left:820.86px;width:400px;text-align:right;top:864.70px;font-size:12.1px;line-height:14px;letter-spacing:-0.135px;word-spacing:-0.008px;">100,000 USD</div>
<div class="abs tag" style="left:1253px;top:864.05px;width:31.5px;background:#cccccc"></div><div class="abs t" style="left:1256.84px;top:865.85px;font-size:11.6px;line-height:13px;letter-spacing:-0.012px;color:#222;-webkit-text-stroke:0">Spot</div>
<div class="abs t" style="left:1425.00px;top:864.70px;font-size:12.5px;line-height:14px;letter-spacing:0.045px;">14294029</div>
<div class="abs ln" style="top:919.10px"></div>
<div class="abs t" style="left:150.50px;top:895.70px;font-size:12.1px;line-height:14px;letter-spacing:0.154px;">MABL</div>
<div class="abs t" style="left:295.00px;top:895.70px;font-size:12.1px;line-height:14px;letter-spacing:-0.642px;word-spacing:1.004px;">DRAGNES FF</div>
<div class="abs arr" style="left:374.27px;top:897.80px"><svg width="12" height="12" viewBox="0 0 12 12"><path d="M0.2 6H10.8M5.9 0.6L11.3 6L5.9 11.4" stroke="#222" stroke-width="1.5" fill="none"/></svg></div>
<div class="abs t" style="left:393.22px;top:895.70px;font-size:12.1px;line-height:14px;letter-spacing:-0.399px;word-spacing:0.519px;">DABHOL PORT</div>
<div class="abs t" style="left:529.30px;top:895.70px;font-size:12.5px;line-height:14px;letter-spacing:0.049px;">Baffin</div>
<div class="abs t" style="left:375.27px;width:400px;text-align:right;top:895.70px;font-size:12.1px;line-height:14px;letter-spacing:0.275px;word-spacing:-0.828px;">15.000 MT</div>
<div class="abs t" style="left:806.50px;top:895.70px;font-size:12.5px;line-height:14px;letter-spacing:-0.025px;">Aggregates</div>
<div class="abs tag" style="left:947px;top:895.20px;width:61.7px;background:#cccccc"></div><div class="abs t" style="left:951.40px;top:897.00px;font-size:11.6px;line-height:13px;letter-spacing:0.121px;color:#222;-webkit-text-stroke:0">Possibility</div>
<div class="abs t" style="left:820.75px;width:400px;text-align:right;top:895.70px;font-size:12.1px;line-height:14px;letter-spacing:-0.250px;word-spacing:0.222px;">1,485 USD</div>
<div class="abs tag" style="left:1253px;top:895.20px;width:31.5px;background:#cccccc"></div><div class="abs t" style="left:1256.84px;top:897.00px;font-size:11.6px;line-height:13px;letter-spacing:-0.012px;color:#222;-webkit-text-stroke:0">Spot</div>
<div class="abs t" style="left:1425.00px;top:895.70px;font-size:12.5px;line-height:14px;letter-spacing:0.045px;">13329865</div>
<div class="abs ln" style="top:950.05px"></div>
<div class="abs t" style="left:32.00px;top:927.00px;font-size:12.5px;line-height:14px;letter-spacing:0.036px;">dataloy</div>
<div class="abs t" style="left:150.50px;top:927.00px;font-size:12.1px;line-height:14px;letter-spacing:-0.765px;">DRY</div>
<div class="abs t" style="left:295.00px;top:927.00px;font-size:12.1px;line-height:14px;letter-spacing:0.046px;">YANTAI</div>
<div class="abs arr" style="left:343.88px;top:929.10px"><svg width="12" height="12" viewBox="0 0 12 12"><path d="M0.2 6H10.8M5.9 0.6L11.3 6L5.9 11.4" stroke="#222" stroke-width="1.5" fill="none"/></svg></div>
<div class="abs t" style="left:362.83px;top:927.00px;font-size:12.1px;line-height:14px;letter-spacing:-0.384px;word-spacing:0.489px;">NEW WESTMINSTER</div>
<div class="abs t" style="left:529.30px;top:927.00px;font-size:12.5px;line-height:14px;letter-spacing:-0.135px;word-spacing:-0.121px;">Shipper 1</div>
<div class="abs t" style="left:375.28px;width:400px;text-align:right;top:927.00px;font-size:12.1px;line-height:14px;letter-spacing:0.276px;word-spacing:-0.831px;">0.000 MT</div>
<div class="abs t" style="left:806.50px;top:927.00px;font-size:12.5px;line-height:14px;letter-spacing:-0.348px;">Car</div>
<div class="abs tag" style="left:947px;top:926.08px;width:60px;background:#28a65c"></div><div class="abs t" style="left:951.54px;top:927.88px;font-size:11.6px;line-height:13px;letter-spacing:0.127px;color:#fff;-webkit-text-stroke:0">Indication</div>
<div class="abs t" style="left:820.45px;width:400px;text-align:right;top:927.00px;font-size:12.1px;line-height:14px;letter-spacing:-0.548px;word-spacing:0.818px;">0 USD</div>
<div class="abs tag" style="left:1253px;top:926.08px;width:141px;background:#1c6b38"></div><div class="abs t" style="left:1257.36px;top:927.88px;font-size:11.6px;line-height:13px;letter-spacing:0.233px;word-spacing:-0.816px;color:#fff;-webkit-text-stroke:0">Contract of Affreightment</div>
<div class="abs t" style="left:1425.00px;top:927.00px;font-size:12.5px;line-height:14px;letter-spacing:0.045px;">13301004</div>
<div class="abs ln" style="top:998.90px"></div>
<div class="abs t" style="left:32.00px;top:966.90px;font-size:12.5px;line-height:14px;letter-spacing:0.036px;">dataloy</div>
<div class="abs t" style="left:150.50px;top:966.90px;font-size:12.1px;line-height:14px;letter-spacing:-0.765px;">DRY</div>
<div class="abs t" style="left:295.00px;top:958.07px;font-size:12.1px;line-height:14px;letter-spacing:-0.122px;word-spacing:-0.034px;">AASTA HANSTEEN</div>
<div class="abs arr" style="left:408.31px;top:959.77px"><svg width="12" height="12" viewBox="0 0 12 12"><path d="M0.2 6H10.8M5.9 0.6L11.3 6L5.9 11.4" stroke="#222" stroke-width="1.5" fill="none"/></svg></div>
<div class="abs t" style="left:295.00px;top:976.37px;font-size:12.1px;line-height:14px;letter-spacing:-0.122px;word-spacing:-0.034px;">AASTA HANSTEEN</div>
<div class="abs t" style="left:529.30px;top:966.90px;font-size:12.5px;line-height:14px;letter-spacing:0.049px;">Baffin</div>
<div class="abs t" style="left:375.27px;width:400px;text-align:right;top:966.90px;font-size:12.1px;line-height:14px;letter-spacing:0.274px;word-spacing:-0.826px;">554.000 MT</div>
<div class="abs tag" style="left:947px;top:965.97px;width:61.7px;background:#cccccc"></div><div class="abs t" style="left:951.40px;top:967.77px;font-size:11.6px;line-height:13px;letter-spacing:0.121px;color:#222;-webkit-text-stroke:0">Possibility</div>
<div class="abs t" style="left:820.45px;width:400px;text-align:right;top:966.90px;font-size:12.1px;line-height:14px;letter-spacing:-0.548px;word-spacing:0.818px;">0 USD</div>
<div class="abs tag" style="left:1253px;top:965.97px;width:31.5px;background:#cccccc"></div><div class="abs t" style="left:1256.84px;top:967.77px;font-size:11.6px;line-height:13px;letter-spacing:-0.012px;color:#222;-webkit-text-stroke:0">Spot</div>
<div class="abs t" style="left:1425.00px;top:966.90px;font-size:12.5px;line-height:14px;letter-spacing:0.045px;">13300987</div>
<div class="abs ln" style="top:1029.75px"></div>
<div class="abs t" style="left:32.00px;top:1006.70px;font-size:12.5px;line-height:14px;letter-spacing:0.036px;">dataloy</div>
<div class="abs t" style="left:150.50px;top:1006.70px;font-size:12.1px;line-height:14px;letter-spacing:-0.765px;">DRY</div>
<div class="abs t" style="left:295.00px;top:1006.70px;font-size:12.1px;line-height:14px;letter-spacing:0.046px;">YANTAI</div>
<div class="abs arr" style="left:343.88px;top:1008.80px"><svg width="12" height="12" viewBox="0 0 12 12"><path d="M0.2 6H10.8M5.9 0.6L11.3 6L5.9 11.4" stroke="#222" stroke-width="1.5" fill="none"/></svg></div>
<div class="abs t" style="left:362.83px;top:1006.70px;font-size:12.1px;line-height:14px;letter-spacing:-0.384px;word-spacing:0.489px;">NEW WESTMINSTER</div>
<div class="abs t" style="left:529.30px;top:1006.70px;font-size:12.5px;line-height:14px;letter-spacing:-0.135px;word-spacing:-0.121px;">Shipper 1</div>
<div class="abs t" style="left:375.28px;width:400px;text-align:right;top:1006.70px;font-size:12.1px;line-height:14px;letter-spacing:0.276px;word-spacing:-0.831px;">0.000 MT</div>
<div class="abs t" style="left:806.50px;top:1006.70px;font-size:12.5px;line-height:14px;letter-spacing:-0.348px;">Car</div>
<div class="abs tag" style="left:947px;top:1005.83px;width:60px;background:#28a65c"></div><div class="abs t" style="left:951.54px;top:1007.62px;font-size:11.6px;line-height:13px;letter-spacing:0.127px;color:#fff;-webkit-text-stroke:0">Indication</div>
<div class="abs t" style="left:820.45px;width:400px;text-align:right;top:1006.70px;font-size:12.1px;line-height:14px;letter-spacing:-0.548px;word-spacing:0.818px;">0 USD</div>
<div class="abs tag" style="left:1253px;top:1005.83px;width:141px;background:#1c6b38"></div><div class="abs t" style="left:1257.36px;top:1007.62px;font-size:11.6px;line-height:13px;letter-spacing:0.233px;word-spacing:-0.816px;color:#fff;-webkit-text-stroke:0">Contract of Affreightment</div>
<div class="abs t" style="left:1425.00px;top:1006.70px;font-size:12.5px;line-height:14px;letter-spacing:0.045px;">13299678</div>
<div class="abs ln" style="top:1060.90px"></div>
<div class="abs t" style="left:32.00px;top:1037.80px;font-size:12.5px;line-height:14px;letter-spacing:0.036px;">dataloy</div>
<div class="abs t" style="left:150.50px;top:1037.80px;font-size:12.1px;line-height:14px;letter-spacing:-0.765px;">DRY</div>
<div class="abs t" style="left:295.00px;top:1037.80px;font-size:12.1px;line-height:14px;letter-spacing:-0.122px;word-spacing:-0.034px;">AASTA HANSTEEN</div>
<div class="abs arr" style="left:407.31px;top:1039.90px"><svg width="12" height="12" viewBox="0 0 12 12"><path d="M0.2 6H10.8M5.9 0.6L11.3 6L5.9 11.4" stroke="#222" stroke-width="1.5" fill="none"/></svg></div>
<div class="abs t" style="left:426.26px;top:1037.80px;font-size:12.1px;line-height:14px;letter-spacing:-0.222px;">ABASHIRI</div>
<div class="abs t" style="left:529.30px;top:1037.80px;font-size:12.5px;line-height:14px;letter-spacing:-0.042px;word-spacing:-0.307px;">Bayern Materials</div>
<div class="abs t" style="left:374.94px;width:400px;text-align:right;top:1037.80px;font-size:12.1px;line-height:14px;letter-spacing:-0.063px;word-spacing:-0.154px;">5,555.000 CUFT</div>
<div class="abs t" style="left:806.50px;top:1037.80px;font-size:12.1px;line-height:14px;letter-spacing:0.157px;">A3</div>
<div class="abs tag" style="left:947px;top:1036.83px;width:61.7px;background:#cccccc"></div><div class="abs t" style="left:951.40px;top:1038.62px;font-size:11.6px;line-height:13px;letter-spacing:0.121px;color:#222;-webkit-text-stroke:0">Possibility</div>
<div class="abs t" style="left:820.45px;width:400px;text-align:right;top:1037.80px;font-size:12.1px;line-height:14px;letter-spacing:-0.548px;word-spacing:0.818px;">0 USD</div>
<div class="abs tag" style="left:1253px;top:1036.83px;width:31.5px;background:#cccccc"></div><div class="abs t" style="left:1256.84px;top:1038.62px;font-size:11.6px;line-height:13px;letter-spacing:-0.012px;color:#222;-webkit-text-stroke:0">Spot</div>
<div class="abs t" style="left:1425.00px;top:1037.80px;font-size:12.5px;line-height:14px;letter-spacing:0.045px;">13289080</div>
<div class="abs ln" style="top:1091.60px"></div>
<div class="abs t" style="left:150.50px;top:1069.80px;font-size:12.1px;line-height:14px;letter-spacing:-0.765px;">DRY</div>
<div class="abs t" style="left:295.00px;top:1069.80px;font-size:12.1px;line-height:14px;letter-spacing:-0.696px;">OSLO</div>
<div class="abs arr" style="left:332.54px;top:1071.90px"><svg width="12" height="12" viewBox="0 0 12 12"><path d="M0.2 6H10.8M5.9 0.6L11.3 6L5.9 11.4" stroke="#222" stroke-width="1.5" fill="none"/></svg></div>
<div class="abs t" style="left:351.49px;top:1069.80px;font-size:12.1px;line-height:14px;letter-spacing:-0.696px;">BERGEN</div>
<div class="abs t" style="left:529.30px;top:1069.80px;font-size:12.5px;line-height:14px;letter-spacing:-0.042px;word-spacing:-0.307px;">Bayern Materials</div>
<div class="abs t" style="left:375.28px;width:400px;text-align:right;top:1069.80px;font-size:12.1px;line-height:14px;letter-spacing:0.276px;word-spacing:-0.831px;">0.000 MT</div>
<div class="abs t" style="left:806.50px;top:1069.80px;font-size:12.5px;line-height:14px;letter-spacing:0.035px;">Fertiliser</div>
<div class="abs tag" style="left:947px;top:1067.75px;width:61.7px;background:#cccccc"></div><div class="abs t" style="left:951.40px;top:1069.55px;font-size:11.6px;line-height:13px;letter-spacing:0.121px;color:#222;-webkit-text-stroke:0">Possibility</div>
<div class="abs t" style="left:820.18px;width:400px;text-align:right;top:1069.80px;font-size:12.1px;line-height:14px;letter-spacing:-0.822px;word-spacing:1.366px;">0 EUR</div>
<div class="abs tag" style="left:1253px;top:1067.75px;width:141px;background:#1c6b38"></div><div class="abs t" style="left:1257.36px;top:1069.55px;font-size:11.6px;line-height:13px;letter-spacing:0.233px;word-spacing:-0.816px;color:#fff;-webkit-text-stroke:0">Contract of Affreightment</div>
<div class="abs t" style="left:1425.00px;top:1069.80px;font-size:12.5px;line-height:14px;letter-spacing:0.045px;">13287405</div>
<div class="abs ln" style="top:1123.80px"></div>
<div class="abs t" style="left:150.50px;top:1100.50px;font-size:12.1px;line-height:14px;letter-spacing:-0.765px;">DRY</div>
<div class="abs t" style="left:295.00px;top:1100.50px;font-size:12.1px;line-height:14px;letter-spacing:0.046px;">YANTAI</div>
<div class="abs arr" style="left:343.88px;top:1102.60px"><svg width="12" height="12" viewBox="0 0 12 12"><path d="M0.2 6H10.8M5.9 0.6L11.3 6L5.9 11.4" stroke="#222" stroke-width="1.5" fill="none"/></svg></div>
<div class="abs t" style="left:362.83px;top:1100.50px;font-size:12.1px;line-height:14px;letter-spacing:-0.384px;word-spacing:0.489px;">NEW WESTMINSTER</div>
<div class="abs t" style="left:529.30px;top:1100.50px;font-size:12.5px;line-height:14px;letter-spacing:-0.135px;word-spacing:-0.121px;">Shipper 1</div>
<div class="abs t" style="left:375.28px;width:400px;text-align:right;top:1100.50px;font-size:12.1px;line-height:14px;letter-spacing:0.276px;word-spacing:-0.831px;">0.000 MT</div>
<div class="abs t" style="left:806.50px;top:1100.50px;font-size:12.5px;line-height:14px;letter-spacing:-0.348px;">Car</div>
<div class="abs tag" style="left:947px;top:1099.20px;width:60px;background:#28a65c"></div><div class="abs t" style="left:951.54px;top:1101.00px;font-size:11.6px;line-height:13px;letter-spacing:0.127px;color:#fff;-webkit-text-stroke:0">Indication</div>
<div class="abs t" style="left:820.45px;width:400px;text-align:right;top:1100.50px;font-size:12.1px;line-height:14px;letter-spacing:-0.548px;word-spacing:0.818px;">0 USD</div>
<div class="abs tag" style="left:1253px;top:1099.20px;width:141px;background:#1c6b38"></div><div class="abs t" style="left:1257.36px;top:1101.00px;font-size:11.6px;line-height:13px;letter-spacing:0.233px;word-spacing:-0.816px;color:#fff;-webkit-text-stroke:0">Contract of Affreightment</div>
<div class="abs t" style="left:1425.00px;top:1100.50px;font-size:12.5px;line-height:14px;letter-spacing:0.045px;">13286509</div>
<div class="abs t" style="left:32.00px;top:1131.80px;font-size:12.5px;line-height:14px;letter-spacing:0.036px;">dataloy</div>
<div class="abs t" style="left:150.50px;top:1131.80px;font-size:12.1px;line-height:14px;letter-spacing:-0.765px;">DRY</div>
<div class="abs t" style="left:295.00px;top:1131.80px;font-size:12.1px;line-height:14px;letter-spacing:-0.696px;">BERGEN</div>
<div class="abs arr" style="left:348.62px;top:1133.90px"><svg width="12" height="12" viewBox="0 0 12 12"><path d="M0.2 6H10.8M5.9 0.6L11.3 6L5.9 11.4" stroke="#222" stroke-width="1.5" fill="none"/></svg></div>
<div class="abs t" style="left:367.57px;top:1131.80px;font-size:12.1px;line-height:14px;letter-spacing:-0.414px;">HASSELBY</div>
<div class="abs t" style="left:529.30px;top:1131.80px;font-size:12.5px;line-height:14px;letter-spacing:0.049px;">Baffin</div>
<div class="abs t" style="left:374.87px;width:400px;text-align:right;top:1131.80px;font-size:12.1px;line-height:14px;letter-spacing:-0.128px;word-spacing:-0.022px;">1,000.000 CEU</div>
<div class="abs t" style="left:806.50px;top:1131.80px;font-size:12.1px;line-height:14px;letter-spacing:0.157px;">A3</div>
<div class="abs tag" style="left:947px;top:1131.25px;width:61.7px;background:#cccccc"></div><div class="abs t" style="left:951.40px;top:1133.05px;font-size:11.6px;line-height:13px;letter-spacing:0.121px;color:#222;-webkit-text-stroke:0">Possibility</div>
<div class="abs t" style="left:820.86px;width:400px;text-align:right;top:1131.80px;font-size:12.1px;line-height:14px;letter-spacing:-0.135px;word-spacing:-0.008px;">183,315 USD</div>
<div class="abs tag" style="left:1253px;top:1131.25px;width:31.5px;background:#cccccc"></div><div class="abs t" style="left:1256.84px;top:1133.05px;font-size:11.6px;line-height:13px;letter-spacing:-0.012px;color:#222;-webkit-text-stroke:0">Spot</div>
<div class="abs t" style="left:1425.00px;top:1131.80px;font-size:12.5px;line-height:14px;letter-spacing:0.045px;">13286060</div>
<div class="abs red" style="left:20px;top:204px;width:101px;height:465.5px"></div>
<div class="abs red" style="left:26px;top:803.5px;width:89px;height:108px"></div>
<div class="abs red" style="left:25px;top:1070px;width:92px;height:48.5px"></div>
<div class="abs lm"></div>
<div class="abs t" style="left:762.36px;top:1181.00px;font-size:12.2px;line-height:14px;letter-spacing:0.046px;word-spacing:-0.461px;color:#1565e0;-webkit-text-stroke:0.25px #1565e0">Load more</div>
</body></html>
